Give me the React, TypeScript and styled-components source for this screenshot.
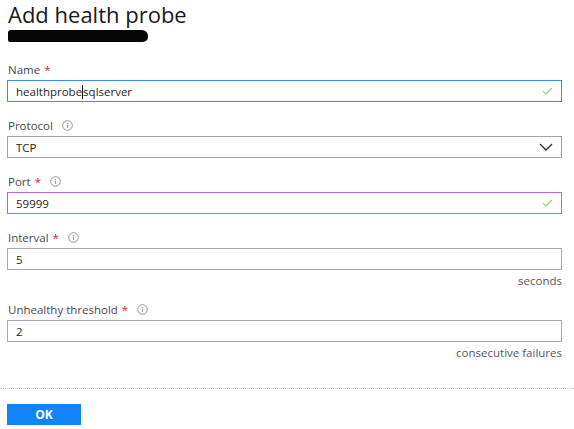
import React from 'react';
import styled, { createGlobalStyle } from 'styled-components';

const GlobalStyle = createGlobalStyle`
  body {
    margin: 0;
    background: #ffffff;
    font-family: "Open Sans", "Noto Sans", Arial, sans-serif;
    color: #323130;
  }
`;

const Page = styled.div`
  width: 574px;
  height: 429px;
  overflow: hidden;
`;

const Header = styled.div`
  padding: 0 12px 0 8px;
`;

const Title = styled.h1`
  margin: 0;
  font-size: 22px;
  font-weight: 400;
  line-height: 28px;
  color: #1b1a19;
`;

const Redaction = styled.div`
  margin-top: 2px;
  width: 140px;
  height: 12px;
  background: #050505;
  border-radius: 3px 6px 5px 2px;
`;

const Form = styled.div`
  margin-top: 18px;
  padding: 0 12px 0 7px;
  display: flex;
  flex-direction: column;
  gap: 14px;
`;

const Field = styled.div`
  display: flex;
  flex-direction: column;
`;

const Label = styled.div`
  display: flex;
  align-items: center;
  height: 18px;
  margin-bottom: 2px;
  padding-left: 1px;
  font-size: 11.5px;
  color: #4a4848;
`;

const Required = styled.span`
  color: #c8262b;
  margin-left: 4px;
`;

const InfoWrap = styled.span`
  display: inline-flex;
  margin-left: 9px;
`;

const Box = styled.div<{ $border: string }>`
  box-sizing: border-box;
  height: 22px;
  display: flex;
  align-items: center;
  padding: 0 8px 0 8px;
  border: 1px solid ${(p) => p.$border};
  font-size: 11.5px;
  color: #1f1e1d;
`;

const Value = styled.span`
  flex: 1;
  white-space: nowrap;
`;

const Caret = styled.span`
  display: inline-block;
  width: 1px;
  height: 14px;
  background: #111;
  vertical-align: -3px;
`;

const Hint = styled.div`
  margin: 3px 0 -3px;
  text-align: right;
  font-size: 11.5px;
  line-height: 16px;
  color: #57565a;
`;

const Separator = styled.div`
  margin-top: 30px;
  border-top: 1px dotted #c4c4ea;
`;

const Footer = styled.div`
  padding: 13px 0 0 7px;
`;

const OkButton = styled.button`
  width: 74px;
  height: 21px;
  border: none;
  background: #1283f8;
  color: #ffffff;
  font-family: "Open Sans", "Noto Sans", Arial, sans-serif;
  font-weight: 700;
  font-size: 12px;
  padding: 0;
`;

const InfoIcon = () => (
  <svg width="11" height="11" viewBox="0 0 11 11">
    <circle cx="5.5" cy="5.5" r="4.8" fill="none" stroke="#8a8886" strokeWidth="0.9" />
    <line x1="5.5" y1="4.8" x2="5.5" y2="8" stroke="#8a8886" strokeWidth="0.9" />
    <circle cx="5.5" cy="3.3" r="0.55" fill="#8a8886" />
  </svg>
);

const Check = () => (
  <svg width="11" height="8" viewBox="0 0 11 8">
    <path d="M1 4.2 L3.8 7 L10 1" fill="none" stroke="#8fd18c" strokeWidth="1.2" />
  </svg>
);

const Chevron = () => (
  <svg width="14" height="8" viewBox="0 0 14 8">
    <path d="M1 1 L7 7 L13 1" fill="none" stroke="#2b2a36" strokeWidth="1.3" />
  </svg>
);

const Info = () => (
  <InfoWrap>
    <InfoIcon />
  </InfoWrap>
);

export default function App() {
  return (
    <Page>
      <GlobalStyle />
      <Header>
        <Title>Add health probe</Title>
        <Redaction />
      </Header>
      <Form>
        <Field>
          <Label>
            Name<Required>*</Required>
          </Label>
          <Box $border="#3c8ded">
            <Value>
              healthprobe<Caret />sqlserver
            </Value>
            <Check />
          </Box>
        </Field>
        <Field>
          <Label>
            Protocol
            <Info />
          </Label>
          <Box $border="#a3a1ab">
            <Value>TCP</Value>
            <Chevron />
          </Box>
        </Field>
        <Field>
          <Label>
            Port<Required>*</Required>
            <Info />
          </Label>
          <Box $border="#b469de">
            <Value>59999</Value>
            <Check />
          </Box>
        </Field>
        <Field>
          <Label>
            Interval<Required>*</Required>
            <Info />
          </Label>
          <Box $border="#aaa7be">
            <Value>5</Value>
          </Box>
          <Hint>seconds</Hint>
        </Field>
        <Field>
          <Label>
            Unhealthy threshold<Required>*</Required>
            <Info />
          </Label>
          <Box $border="#aaa7be">
            <Value>2</Value>
          </Box>
          <Hint>consecutive failures</Hint>
        </Field>
      </Form>
      <Separator />
      <Footer>
        <OkButton>OK</OkButton>
      </Footer>
    </Page>
  );
}
